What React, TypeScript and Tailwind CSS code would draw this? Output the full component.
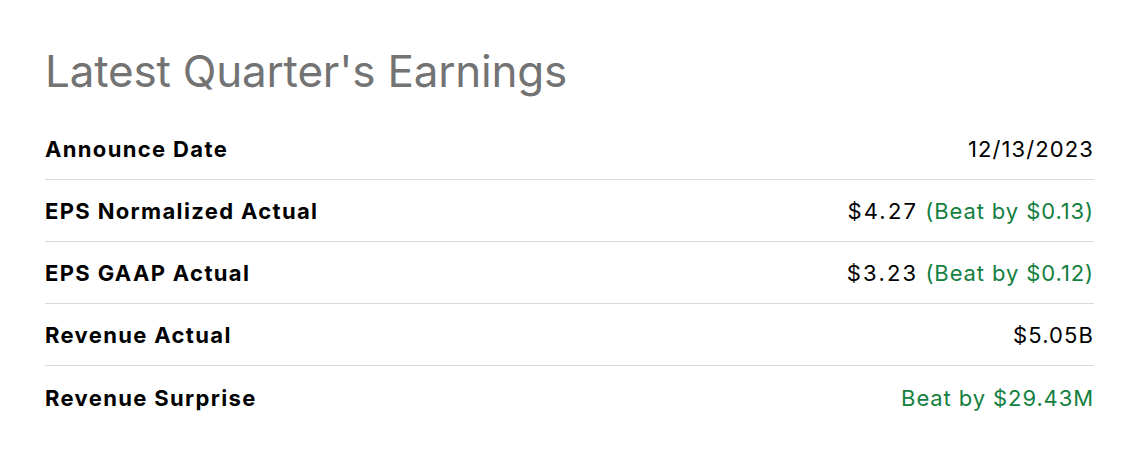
import React from "react";

const rows = [
  { label: "Announce Date", value: "12/13/2023" },
  { label: "EPS Normalized Actual", value: "$4.27", note: "(Beat by $0.13)" },
  { label: "EPS GAAP Actual", value: "$3.23", note: "(Beat by $0.12)" },
  { label: "Revenue Actual", value: "$5.05B" },
  { label: "Revenue Surprise", note: "Beat by $29.43M" },
];

export default function App() {
  return (
    <div className="w-[1132px] h-[466px] bg-white pl-[45px] pr-[38px] pt-[41px] font-['Inter',sans-serif]">
      <h1 className="text-[44px] leading-[60px] text-[#737373] font-normal tracking-[-0.2px]">
        Latest Quarter's Earnings
      </h1>
      <div className="mt-[17px]">
        {rows.map((r, i) => (
          <div
            key={r.label}
            className={
              "flex items-center justify-between h-[62px] pt-[2px] text-[22px] " +
              (i < rows.length - 1 ? "border-b border-[#d9d9d9]" : "")
            }
          >
            <span className="font-bold text-black tracking-[1.35px]">{r.label}</span>
            <span className="text-black tracking-[0.9px]">
              {r.value && (
                <span className={r.note ? "tracking-[2.2px]" : "tracking-[1.1px]"}>{r.value}</span>
              )}
              {r.value && r.note ? " " : ""}
              {r.note && <span className="text-[#14803f]">{r.note}</span>}
            </span>
          </div>
        ))}
      </div>
    </div>
  );
}
